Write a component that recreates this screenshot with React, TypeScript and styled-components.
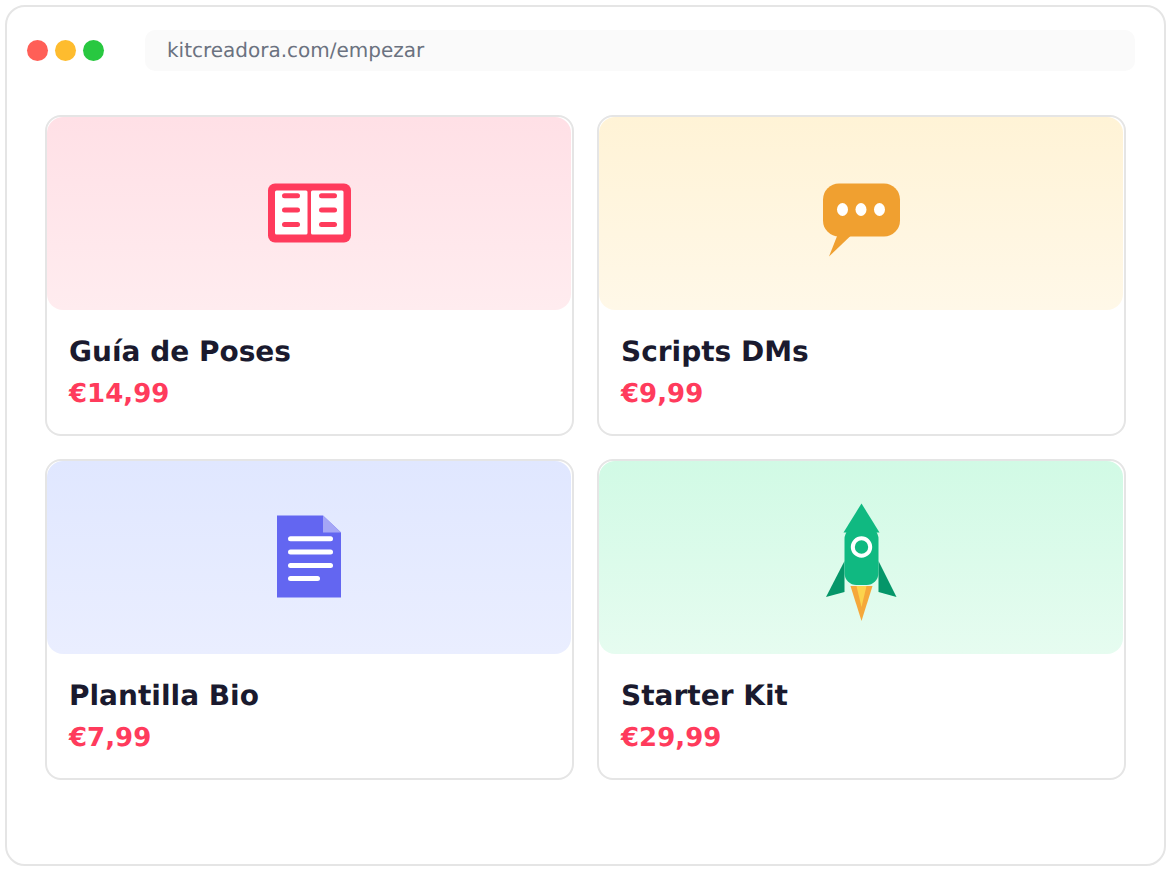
import React from "react";
import styled, { createGlobalStyle } from "styled-components";

const GlobalStyle = createGlobalStyle`
  html, body {
    margin: 0;
    padding: 0;
    background: #ffffff;
    font-family: "DejaVu Sans", sans-serif;
    text-rendering: geometricPrecision;
  }
`;

const Frame = styled.div`
  box-sizing: border-box;
  width: 1161px;
  height: 861px;
  margin: 5px;
  border: 2px solid #e5e5e5;
  border-radius: 20px;
  background: #ffffff;
  overflow: hidden;
`;

const TitleBar = styled.div`
  display: flex;
  align-items: center;
  padding: 23px 29px 0 20px;
`;

const Dots = styled.div`
  display: flex;
  gap: 7px;
  margin-right: 41px;
`;

const Dot = styled.span<{ $color: string }>`
  width: 21px;
  height: 21px;
  border-radius: 50%;
  background: ${({ $color }) => $color};
`;

const UrlBar = styled.div`
  flex: 1;
  height: 41px;
  padding-left: 22px;
  border-radius: 10px;
  background: #fafafa;
  color: #6b7280;
  font-size: 20px;
  line-height: 41px;
`;

const Grid = styled.div`
  display: grid;
  grid-template-columns: 529px 529px;
  grid-auto-rows: 321px;
  gap: 23px;
  padding: 44px 0 0 38px;
`;

const Card = styled.div`
  box-sizing: border-box;
  border: 2px solid #e5e5e5;
  border-radius: 16px;
  background: #ffffff;
  overflow: hidden;
`;

const Thumb = styled.div<{ $from: string; $to: string }>`
  display: flex;
  align-items: center;
  justify-content: center;
  height: 193px;
  margin-right: 1px;
  border-radius: 16px;
  background: linear-gradient(180deg, ${({ $from }) => $from}, ${({ $to }) => $to});
`;

const Icon = styled.svg`
  display: block;
  width: 120px;
  height: 120px;
  overflow: visible;
`;

const CardBody = styled.div`
  padding: 24px 22px 0;
`;

const Name = styled.div`
  color: #1a1a2e;
  font-size: 28px;
  font-weight: 700;
  line-height: 36px;
`;

const Price = styled.div`
  margin-top: 7px;
  color: #ff3b5c;
  font-size: 26px;
  font-weight: 700;
  line-height: 34px;
`;

const BookIcon = () => (
  <Icon viewBox="-0.5 1 120 120">
    <rect x="18.5" y="30.5" width="83" height="59" rx="7" fill="#ff3b5c" />
    <rect x="25.5" y="37.5" width="32.5" height="44" rx="1.5" fill="#fff" />
    <rect x="61.5" y="37.5" width="32.5" height="44" rx="1.5" fill="#fff" />
    {[40.3, 54.5, 69].map((y) => (
      <React.Fragment key={y}>
        <rect x="32.5" y={y} width="18" height="5" rx="2.5" fill="#ff3b5c" />
        <rect x="69.5" y={y} width="18" height="5" rx="2.5" fill="#ff3b5c" />
      </React.Fragment>
    ))}
  </Icon>
);

const ChatIcon = () => (
  <Icon viewBox="-0.5 1 120 120">
    <rect x="21.5" y="30.5" width="77" height="53" rx="16" fill="#f0a030" />
    <path d="M36 82 L27.5 103.5 L50 82 Z" fill="#f0a030" />
    {[41, 59.5, 78].map((cx) => (
      <ellipse key={cx} cx={cx} cy="56.5" rx="5.5" ry="6.5" fill="#fff" />
    ))}
  </Icon>
);

const DocIcon = () => (
  <Icon viewBox="-0.5 1 120 120">
    <path d="M27.5 18.5 H73.5 L91.5 35.5 V100.5 H27.5 Z" fill="#6366f1" />
    <path d="M73.5 18.5 L91.5 35.5 H73.5 Z" fill="#a5a6f6" />
    <rect x="38.5" y="39.3" width="45" height="5" rx="2.5" fill="#fff" />
    <rect x="38.5" y="52.5" width="45" height="5" rx="2.5" fill="#fff" />
    <rect x="38.5" y="66" width="45" height="5" rx="2.5" fill="#fff" />
    <rect x="38.5" y="79" width="32" height="5" rx="2.5" fill="#fff" />
  </Icon>
);

const RocketIcon = () => (
  <Icon viewBox="-0.5 1 120 120">
    <path d="M43 64 L24.5 100 L43 95 Z" fill="#059669" />
    <path d="M77 64 L95 100 L77 95 Z" fill="#059669" />
    <path d="M49 89 H71 L60 124 Z" fill="#f5a83a" />
    <path d="M55 89 H65 L60 110 Z" fill="#fcd34d" />
    <rect x="43" y="30" width="34" height="58" rx="12" fill="#10b981" />
    <path d="M60 6.5 L78 35.5 H42 Z" fill="#10b981" />
    <circle cx="60" cy="50" r="8.7" fill="#10b981" stroke="#fff" strokeWidth="4" />
  </Icon>
);

const products = [
  { name: "Guía de Poses", price: "€14,99", from: "#ffe0e6", to: "#ffecef", icon: <BookIcon /> },
  { name: "Scripts DMs", price: "€9,99", from: "#fff3d6", to: "#fff8e8", icon: <ChatIcon /> },
  { name: "Plantilla Bio", price: "€7,99", from: "#e0e7ff", to: "#eaeeff", icon: <DocIcon /> },
  { name: "Starter Kit", price: "€29,99", from: "#d1fae5", to: "#e6fcf0", icon: <RocketIcon /> },
];

export default function App() {
  return (
    <>
      <GlobalStyle />
      <Frame>
        <TitleBar>
          <Dots>
            <Dot $color="#ff5f57" />
            <Dot $color="#febc2e" />
            <Dot $color="#28c840" />
          </Dots>
          <UrlBar>kitcreadora.com/empezar</UrlBar>
        </TitleBar>
        <Grid>
          {products.map((product) => (
            <Card key={product.name}>
              <Thumb $from={product.from} $to={product.to}>
                {product.icon}
              </Thumb>
              <CardBody>
                <Name>{product.name}</Name>
                <Price>{product.price}</Price>
              </CardBody>
            </Card>
          ))}
        </Grid>
      </Frame>
    </>
  );
}
